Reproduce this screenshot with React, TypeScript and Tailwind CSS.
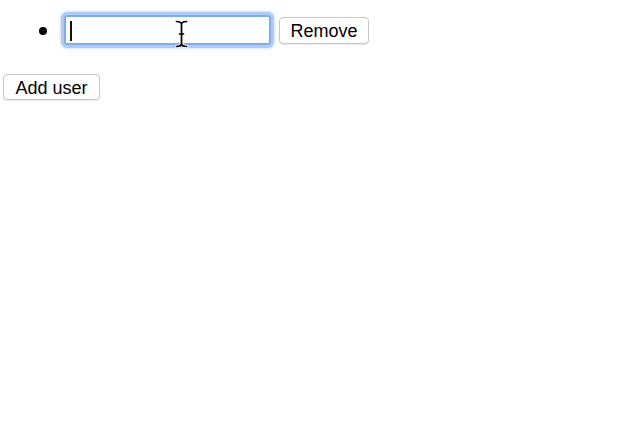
import { useState } from "react";

export default function App() {
  const [users, setUsers] = useState<string[]>([""]);

  const font = "font-['Liberation_Sans','Helvetica',Arial,sans-serif]";
  const btn =
    "bg-white border border-[#c6c6c6] rounded-[4px] shadow-[0_1px_1px_rgba(0,0,0,0.08)] text-[18px] leading-none text-black pt-[1px]";

  return (
    <div className={`relative min-h-screen bg-white pt-[15px] ${font}`}>
      <ul className="pl-[39px]">
        {users.map((name, i) => (
          <li key={i} className="flex items-center">
            <span className="w-2 h-2 rounded-full bg-black mr-[17px] mt-[1px]" />
            <div className="relative">
              <input
                value={name}
                onChange={(e) =>
                  setUsers(users.map((u, j) => (j === i ? e.target.value : u)))
                }
                className="block w-[207px] h-[30px] border-2 border-[#7eacf2] rounded-[3px] shadow-[0_0_0_3px_#aecbf6,0_0_2px_4px_rgba(174,203,246,0.5)] outline-none px-[4px] text-[18px] caret-transparent"
              />
              {/* text caret */}
              <span className="absolute left-[6px] top-[6px] w-[1.5px] h-[20px] bg-[#111]" />
            </div>
            <button
              onClick={() => setUsers(users.filter((_, j) => j !== i))}
              className={`${btn} ml-[8px] w-[90px] h-[27px] mt-[1px]`}
            >
              Remove
            </button>
          </li>
        ))}
      </ul>

      <div className="mt-[29px] pl-[3px]">
        <button
          onClick={() => setUsers([...users, ""])}
          className={`${btn} w-[97px] h-[26px]`}
        >
          Add user
        </button>
      </div>

      {/* mouse I-beam cursor */}
      <svg
        className="absolute left-[175px] top-[20px]"
        width="13"
        height="28"
        viewBox="0 0 13 28"
        fill="none"
      >
        <g stroke="#fff" strokeWidth="3.4" strokeLinecap="round">
          <path d="M1.5 1.5C4.5 1.5 6.5 2.5 6.5 4.5M11.5 1.5C8.5 1.5 6.5 2.5 6.5 4.5V23.5M6.5 23.5C6.5 25.5 4.5 26.5 1.5 26.5M6.5 23.5C6.5 25.5 8.5 26.5 11.5 26.5M4.5 14H8.5" />
        </g>
        <g stroke="#000" strokeWidth="1.7" strokeLinecap="round">
          <path d="M1.5 1.5C4.5 1.5 6.5 2.5 6.5 4.5M11.5 1.5C8.5 1.5 6.5 2.5 6.5 4.5V23.5M6.5 23.5C6.5 25.5 4.5 26.5 1.5 26.5M6.5 23.5C6.5 25.5 8.5 26.5 11.5 26.5M4.5 14H8.5" />
        </g>
      </svg>
    </div>
  );
}
